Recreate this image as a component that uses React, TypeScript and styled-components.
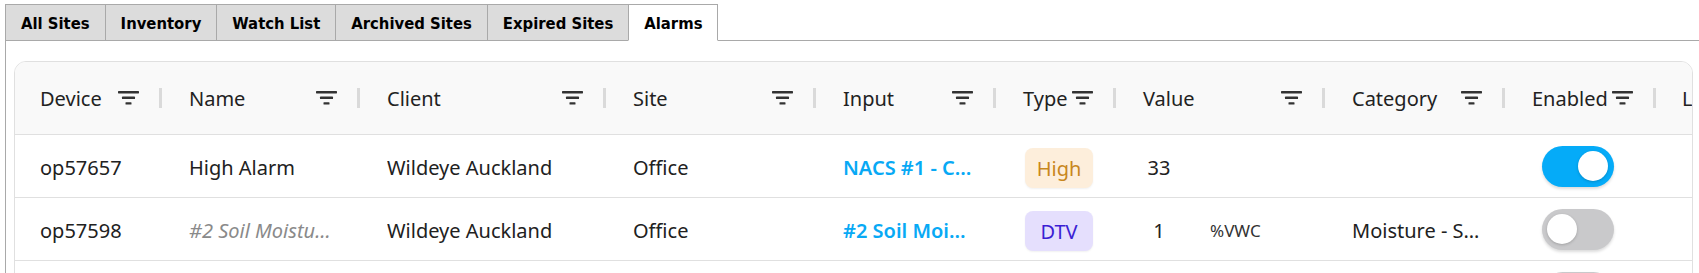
import * as React from "react";
import styled, { createGlobalStyle } from "styled-components";

const GlobalStyle = createGlobalStyle`
  html, body {
    margin: 0;
    padding: 0;
    background: #ffffff;
  }
  body {
    font-family: "Noto Sans", "Open Sans", sans-serif;
    color: #212121;
    overflow: hidden;
  }
`;

const COLUMNS = "147px 198px 246px 210px 180px 120px 209px 180px 150px 200px";

const Page = styled.div`
  padding: 4px 0 0 5px;
`;

const TabBar = styled.div`
  display: flex;
  position: relative;
  z-index: 1;
  margin-bottom: -1px;
`;

const Tab = styled.div<{ $active?: boolean }>`
  box-sizing: border-box;
  height: 37px;
  padding: 2px 15px 0;
  margin-right: -1px;
  display: flex;
  align-items: center;
  border: 1px solid #a9a9a9;
  border-bottom-color: ${(p) => (p.$active ? "#ffffff" : "#a9a9a9")};
  background: ${(p) => (p.$active ? "#ffffff" : "#dcdcdc")};
  font-family: "DejaVu Sans Condensed", Tahoma, "DejaVu Sans", sans-serif;
  font-weight: bold;
  font-size: 16.5px;
  color: #000000;
  white-space: nowrap;
`;

const Panel = styled.div`
  border-left: 1px solid #a9a9a9;
  border-top: 1px solid #a9a9a9;
  padding: 20px 6px 20px 8px;
  background: #ffffff;
`;

const Card = styled.div`
  border: 1px solid #e0e0e0;
  border-radius: 12px;
  overflow: hidden;
  background: #ffffff;
`;

const Row = styled.div<{ $header?: boolean }>`
  box-sizing: border-box;
  display: grid;
  grid-template-columns: ${COLUMNS};
  width: max-content;
  height: ${(p) => (p.$header ? 73 : 63)}px;
  border-bottom: 1px solid #e0e0e0;
  background: ${(p) => (p.$header ? "#f9f9f9" : "#ffffff")};
`;

const HeaderCell = styled.div<{ $first?: boolean }>`
  display: flex;
  align-items: center;
  min-width: 0;
  padding-left: ${(p) => (p.$first ? 25 : 27)}px;
`;

const HeaderTitle = styled.span`
  font-size: 20px;
  color: #222222;
  white-space: nowrap;
`;

const Spacer = styled.div`
  flex: 1;
`;

const FilterSvg = styled.svg`
  flex-shrink: 0;
  margin-left: 4px;
  fill: #333333;
`;

const Separator = styled.div`
  flex-shrink: 0;
  width: 3px;
  height: 20px;
  margin-left: 20px;
  background: #dadada;
`;

const Cell = styled.div<{ $first?: boolean }>`
  display: flex;
  align-items: center;
  min-width: 0;
  padding: 2px 22px 0 ${(p) => (p.$first ? 25 : 27)}px;
  font-size: 20px;
`;

const CellText = styled.span<{ $muted?: boolean; $link?: boolean }>`
  overflow: hidden;
  text-overflow: ellipsis;
  white-space: nowrap;
  color: ${(p) => (p.$link ? "#08a9f5" : p.$muted ? "#8a8a8a" : "#212121")};
  font-style: ${(p) => (p.$muted ? "italic" : "normal")};
  font-weight: ${(p) => (p.$link ? 600 : 400)};
`;

const Chip = styled.span<{ $kind: "high" | "dtv" }>`
  box-sizing: border-box;
  width: 68px;
  height: 40px;
  margin: 2px 0 0 2px;
  display: flex;
  align-items: center;
  justify-content: center;
  border-radius: 8px;
  background: ${(p) => (p.$kind === "high" ? "#fdeedb" : "#e5dffd")};
  color: ${(p) => (p.$kind === "high" ? "#c8871e" : "#3b1ed4")};
  box-shadow: 0 1px 2px rgba(0, 0, 0, 0.06);
`;

const ValueNum = styled.span`
  width: 32px;
  text-align: center;
`;

const Unit = styled.span`
  margin-left: 35px;
  font-size: 17px;
  color: #333333;
`;

const Track = styled.div<{ $on?: boolean }>`
  box-sizing: border-box;
  width: 72px;
  height: 41px;
  margin: -2px 0 0 10px;
  padding: 0 6px 0 5px;
  display: flex;
  align-items: center;
  justify-content: ${(p) => (p.$on ? "flex-end" : "flex-start")};
  border-radius: 21px;
  background: ${(p) => (p.$on ? "#05abf8" : "#c9c9cb")};
  box-shadow: 0 2px 3px rgba(0, 0, 0, 0.14);
`;

const Knob = styled.div`
  width: 30px;
  height: 30px;
  border-radius: 50%;
  background: #ffffff;
  box-shadow: 0 1px 3px rgba(0, 0, 0, 0.2);
`;

const FilterIcon = () => (
  <FilterSvg width="21" height="14" viewBox="0 0 21 14">
    <rect x="0" y="0" width="21" height="2.4" rx="0.6" />
    <rect x="4" y="5.6" width="13" height="2.4" rx="0.6" />
    <rect x="7.5" y="11.2" width="6" height="2.4" rx="0.6" />
  </FilterSvg>
);

const tabs = ["All Sites", "Inventory", "Watch List", "Archived Sites", "Expired Sites", "Alarms"];

const headers = ["Device", "Name", "Client", "Site", "Input", "Type", "Value", "Category", "Enabled", "Last Triggered"];

interface IAlarm {
    device: string;
    name: string;
    nameIsDefault: boolean;
    client: string;
    site: string;
    input: string;
    type: "high" | "dtv";
    value: string;
    unit: string;
    category: string;
    enabled: boolean;
}

const alarms: IAlarm[] = [
    {
        device: "op57657",
        name: "High Alarm",
        nameIsDefault: false,
        client: "Wildeye Auckland",
        site: "Office",
        input: "NACS #1 - Current",
        type: "high",
        value: "33",
        unit: "",
        category: "",
        enabled: true,
    },
    {
        device: "op57598",
        name: "#2 Soil Moisture Alarm",
        nameIsDefault: true,
        client: "Wildeye Auckland",
        site: "Office",
        input: "#2 Soil Moisture",
        type: "dtv",
        value: "1",
        unit: "%VWC",
        category: "Moisture - Soil",
        enabled: false,
    },
    {
        device: "op57598",
        name: "#1 Soil Moisture Alarm",
        nameIsDefault: true,
        client: "Wildeye Auckland",
        site: "Office",
        input: "#1 Soil Moisture",
        type: "dtv",
        value: "5",
        unit: "%VWC",
        category: "Moisture - Soil",
        enabled: false,
    },
];

export default function App() {
    return (
        <Page>
            <GlobalStyle />
            <TabBar>
                {tabs.map((t) => (
                    <Tab key={t} $active={t === "Alarms"}>{t}</Tab>
                ))}
            </TabBar>
            <Panel>
                <Card>
                    <Row $header>
                        {headers.map((h, i) => (
                            <HeaderCell key={h} $first={i === 0}>
                                <HeaderTitle>{h}</HeaderTitle>
                                <Spacer />
                                <FilterIcon />
                                <Separator />
                            </HeaderCell>
                        ))}
                    </Row>
                    {alarms.map((a, i) => (
                        <Row key={i}>
                            <Cell $first><CellText>{a.device}</CellText></Cell>
                            <Cell><CellText $muted={a.nameIsDefault}>{a.name}</CellText></Cell>
                            <Cell><CellText>{a.client}</CellText></Cell>
                            <Cell><CellText>{a.site}</CellText></Cell>
                            <Cell><CellText $link>{a.input}</CellText></Cell>
                            <Cell>
                                <Chip $kind={a.type}>{a.type === "high" ? "High" : "DTV"}</Chip>
                            </Cell>
                            <Cell>
                                <ValueNum>{a.value}</ValueNum>
                                {a.unit && <Unit>{a.unit}</Unit>}
                            </Cell>
                            <Cell><CellText>{a.category}</CellText></Cell>
                            <Cell>
                                <Track $on={a.enabled}><Knob /></Track>
                            </Cell>
                            <Cell />
                        </Row>
                    ))}
                </Card>
            </Panel>
        </Page>
    );
}
